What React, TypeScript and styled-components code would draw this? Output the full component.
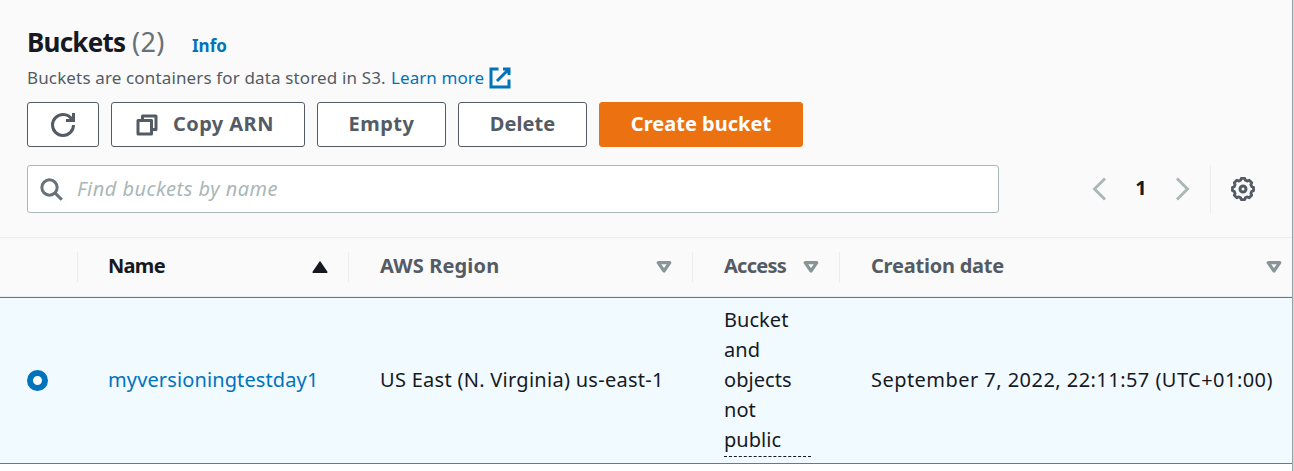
import React from 'react';
import styled, { createGlobalStyle, css } from 'styled-components';

const color = {
  text: '#16191f',
  grey: '#545b64',
  count: '#687078',
  muted: '#aab7b8',
  caret: '#879596',
  link: '#0073bb',
  line: '#eaeded',
  surface: '#fafafa',
  selected: '#f1faff',
  selectedLine: '#00a1c9',
  primary: '#ec7211',
};

const GlobalStyle = createGlobalStyle`
  * { box-sizing: border-box; }
  body {
    margin: 0;
    background: #fff;
    color: ${color.text};
    font-family: "Noto Sans", "Open Sans", sans-serif;
    font-size: 20px;
    line-height: 30px;
    overflow: hidden;
  }
`;

const Panel = styled.main`
  width: 1294px;
  height: 471px;
  border-right: 1px solid #d5dbdb;
  box-shadow: inset -1px 0 0 #98a3a5;
  padding-right: 1px;
  overflow: hidden;
`;

const Header = styled.header`
  display: flex;
  flex-direction: column;
  height: 237px;
  padding: 24px 37px 0 27px;
  background: ${color.surface};
`;

const TitleRow = styled.div`
  display: flex;
  align-items: baseline;
  height: 36px;
  line-height: 36px;
`;

const Title = styled.h1`
  margin: 0;
  width: 105px;
  font-size: 26px;
  font-weight: 700;
  letter-spacing: -0.75px;
`;

const Count = styled.span`
  width: 60px;
  font-size: 27px;
  letter-spacing: 0.3px;
  color: ${color.count};
`;

const Link = styled.a<{ $spacing?: number }>`
  color: ${color.link};
  text-decoration: none;
  letter-spacing: ${p => p.$spacing ?? 0}px;
`;

const InfoLink = styled(Link)`
  font-size: 17px;
  font-weight: 700;
`;

const Description = styled.div`
  display: flex;
  align-items: center;
  height: 24px;
  margin-top: 6px;
  font-size: 17px;
  line-height: 24px;
  letter-spacing: 0.145px;
  color: ${color.grey};
  white-space: nowrap;
`;

const DescriptionText = styled.span`
  width: 364px;
`;

const ExternalLink = styled(Link)`
  display: flex;
  align-items: center;
  gap: 4px;
`;

const Actions = styled.div`
  display: flex;
  gap: 12px;
  margin-top: 12px;
`;

const Button = styled.button<{ $width: number; $spacing?: number; $primary?: boolean }>`
  display: flex;
  align-items: center;
  justify-content: center;
  gap: 14px;
  width: ${p => p.$width}px;
  height: 45px;
  padding: 0;
  border: 1px solid ${color.grey};
  border-radius: 3px;
  background: #fff;
  color: ${color.grey};
  font: 700 20px/30px "Noto Sans", sans-serif;
  letter-spacing: ${p => p.$spacing ?? 0}px;
  ${p =>
    p.$primary &&
    css`
      border-color: ${color.primary};
      background: ${color.primary};
      color: #fff;
    `}
`;

const CopyButton = styled(Button)`
  justify-content: flex-start;
  padding-left: 23px;
`;

const ButtonLabel = styled.span`
  padding-bottom: 2px;
`;

const FilterRow = styled.div`
  display: flex;
  align-items: center;
  justify-content: space-between;
  height: 48px;
  margin-top: 18px;
`;

const SearchBox = styled.label`
  display: flex;
  align-items: center;
  gap: 14px;
  width: 972px;
  height: 48px;
  padding-left: 11px;
  border: 1px solid ${color.muted};
  border-radius: 3px;
  background: #fff;
  color: ${color.count};
`;

const SearchInput = styled.input`
  flex: 1;
  height: 32px;
  padding: 0 0 2px;
  border: 0;
  outline: 0;
  background: transparent;
  font: 20px/30px "Noto Sans", sans-serif;
  &::placeholder {
    color: ${color.muted};
    font-style: italic;
    letter-spacing: 0.48px;
  }
`;

const Preferences = styled.div`
  display: flex;
  align-items: center;
  height: 48px;
  color: ${color.muted};
`;

const PageNumber = styled.span`
  width: 60px;
  padding-bottom: 2px;
  text-align: center;
  font-weight: 700;
  color: ${color.text};
`;

const SettingsSlot = styled.div`
  display: flex;
  align-items: center;
  height: 48px;
  margin-left: 15px;
  padding-left: 20px;
  border-left: 1px solid ${color.line};
  color: ${color.grey};
`;

const columns = css`
  display: grid;
  grid-template-columns: 78px 271px 344px 147px 452px;
`;

const HeadRow = styled.div`
  ${columns}
  align-items: center;
  height: 60px;
  border-top: 1px solid ${color.line};
  border-bottom: 1px solid ${color.line};
  background: ${color.surface};
`;

const HeadCell = styled.div<{ $inset?: number; $active?: boolean; $last?: boolean; $spacing?: number }>`
  display: flex;
  align-items: center;
  justify-content: space-between;
  height: 30px;
  padding: 0 ${p => (p.$last ? 10 : 20)}px 0 ${p => p.$inset ?? 31}px;
  border-right: ${p => (p.$last ? '0' : `1px solid ${color.line}`)};
  font-weight: 700;
  letter-spacing: ${p => p.$spacing ?? 0}px;
  color: ${p => (p.$active ? color.text : color.grey)};
`;

const HeadLabel = styled.span`
  padding-bottom: 2px;
  white-space: nowrap;
`;

const BodyRow = styled.div`
  ${columns}
  align-items: center;
  height: 167px;
  border-top: 1px solid ${color.selectedLine};
  border-bottom: 1px solid ${color.selectedLine};
  background: ${color.selected};
`;

const BodyCell = styled.div<{ $inset?: number; $spacing?: number }>`
  padding: 0 0 2px ${p => p.$inset ?? 31}px;
  letter-spacing: ${p => p.$spacing ?? 0}px;
  white-space: nowrap;
`;

const AccessCell = styled.div`
  padding: 0 29px 0 31px;
`;

const AccessText = styled.div`
  height: 153px;
  padding-top: 1px;
  letter-spacing: 0.05px;
  border-bottom: 1px dashed ${color.text};
`;

const Radio = styled.span`
  width: 21px;
  height: 21px;
  margin-left: 27px;
  border: 6.3px solid ${color.link};
  border-radius: 50%;
  background: #fff;
`;

const Icon = ({ children, size = 24, width = 2 }: { children: React.ReactNode; size?: number; width?: number }) => (
  <svg width={size} height={size} viewBox="0 0 16 16" fill="none" stroke="currentColor" strokeWidth={width} aria-hidden="true">
    {children}
  </svg>
);

const CaretSvg = styled.svg<{ $active?: boolean }>`
  flex: none;
  color: ${p => (p.$active ? color.text : color.caret)};
`;

const Caret = ({ up }: { up?: boolean }) => (
  <CaretSvg $active={up} width="16" height="12" viewBox="0 0 16 12" stroke="currentColor" strokeLinejoin="round">
    {up ? (
      <path d="M1.2 11.2 8 1.2l6.8 10z" fill="currentColor" strokeWidth="1.6" />
    ) : (
      <path d="M2.2 1.7h11.6L8 10z" fill="none" strokeWidth="3.2" />
    )}
  </CaretSvg>
);

// Outline of an eight-toothed wheel around the centre of a 24-unit box.
const gearOutline = () => {
  const points: string[] = [];
  for (let tooth = 0; tooth < 8; tooth++) {
    const base = tooth * 45;
    [[-15, 9.1], [-9.5, 10.7], [9.5, 10.7], [15, 9.1]].forEach(([offset, radius]) => {
      const a = ((base + offset) * Math.PI) / 180;
      points.push(`${(12 + radius * Math.cos(a)).toFixed(2)} ${(12 + radius * Math.sin(a)).toFixed(2)}`);
    });
  }
  return `M${points.join('L')}Z`;
};

const Gear = () => (
  <svg width="24" height="24" viewBox="0 0 24 24" fill="none" stroke="currentColor" strokeWidth="2.8" strokeLinejoin="round" aria-hidden="true">
    <path d={gearOutline()} />
    <circle cx="12" cy="12" r="3" strokeWidth="3" />
  </svg>
);

export default function App() {
  return (
    <>
      <GlobalStyle />
      <Panel>
        <Header>
          <TitleRow>
            <Title>Buckets</Title>
            <Count>(2)</Count>
            <InfoLink>Info</InfoLink>
          </TitleRow>
          <Description>
            <DescriptionText>Buckets are containers for data stored in S3.</DescriptionText>
            <ExternalLink $spacing={0.08}>
              Learn more
              <Icon>
                <path d="M10 2h4v4M6 10l8-8M14 9.05V14H2V2h5" />
              </Icon>
            </ExternalLink>
          </Description>
          <Actions>
            <Button $width={72} aria-label="Refresh">
              <Icon>
                <path d="M15 8c0 3.87-3.13 7-7 7s-7-3.13-7-7 3.13-7 7-7c2.79 0 5.2 1.63 6.33 4M10 5h5V0" />
              </Icon>
            </Button>
            <CopyButton $width={194} $spacing={0.43}>
              <Icon>
                <path d="M2 5h9v9H2zM5 5V2h9v9h-3" strokeLinejoin="round" />
              </Icon>
              <ButtonLabel>Copy ARN</ButtonLabel>
            </CopyButton>
            <Button $width={129} $spacing={0.5}>
              <ButtonLabel>Empty</ButtonLabel>
            </Button>
            <Button $width={129} $spacing={0.1}>
              <ButtonLabel>Delete</ButtonLabel>
            </Button>
            <Button $width={204} $spacing={0.02} $primary>
              <ButtonLabel>Create bucket</ButtonLabel>
            </Button>
          </Actions>
          <FilterRow>
            <SearchBox>
              <Icon>
                <circle cx="7" cy="7" r="5.1" />
                <path d="m15.2 15.2-4.6-4.6" />
              </Icon>
              <SearchInput placeholder="Find buckets by name" />
            </SearchBox>
            <Preferences>
              <Icon width={1.9}>
                <path d="M12 1 5 8l7 7" />
              </Icon>
              <PageNumber>1</PageNumber>
              <Icon width={1.9}>
                <path d="m4 1 7 7-7 7" />
              </Icon>
              <SettingsSlot>
                <Gear />
              </SettingsSlot>
            </Preferences>
          </FilterRow>
        </Header>
        <HeadRow>
          <HeadCell />
          <HeadCell $inset={30} $active $spacing={-0.7}>
            <HeadLabel>Name</HeadLabel>
            <Caret up />
          </HeadCell>
          <HeadCell $spacing={0.15}>
            <HeadLabel>AWS Region</HeadLabel>
            <Caret />
          </HeadCell>
          <HeadCell $spacing={-0.75}>
            <HeadLabel>Access</HeadLabel>
            <Caret />
          </HeadCell>
          <HeadCell $last $spacing={-0.22}>
            <HeadLabel>Creation date</HeadLabel>
            <Caret />
          </HeadCell>
        </HeadRow>
        <BodyRow>
          <Radio role="radio" aria-checked="true" />
          <BodyCell $inset={30}>
            <Link $spacing={0.12}>myversioningtestday1</Link>
          </BodyCell>
          <BodyCell $spacing={0.28}>US East (N. Virginia) us-east-1</BodyCell>
          <AccessCell>
            <AccessText>Bucket and objects not public</AccessText>
          </AccessCell>
          <BodyCell $spacing={0.455}>September 7, 2022, 22:11:57 (UTC+01:00)</BodyCell>
        </BodyRow>
      </Panel>
    </>
  );
}
